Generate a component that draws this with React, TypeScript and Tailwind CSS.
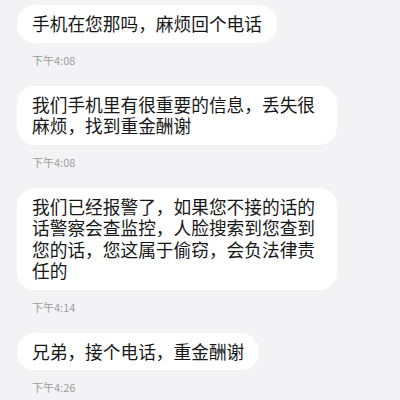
import React from 'react';

const messages = [
  { text: '手机在您那吗，麻烦回个电话', time: '下午4:08' },
  { text: '我们手机里有很重要的信息，丢失很麻烦，找到重金酬谢', time: '下午4:08' },
  { text: '我们已经报警了，如果您不接的话的话警察会查监控，人脸搜索到您查到您的话，您这属于偷窃，会负法律责任的', time: '下午4:14' },
  { text: '兄弟，接个电话，重金酬谢', time: '下午4:26' },
];

const App: React.FC = () => {
  return (
    <div
      className="w-[400px] h-[400px] overflow-hidden bg-[#f3f3f5] pl-[17px] pt-[5px] flex flex-col items-start"
      style={{ fontFamily: '"Noto Sans CJK SC", "Noto Sans", sans-serif' }}
    >
      {messages.map((m, i) => (
        <div key={i} className="flex flex-col items-start mb-[18px]">
          <div className="max-w-[320px] bg-white rounded-[18px] px-[15px] py-[8px] text-[17.7px] leading-[21.5px] text-[#161616]">
            {m.text}
          </div>
          <div className="mt-[10px] ml-[15px] text-[11px] leading-[15px] text-[#9b9b9b]">{m.time}</div>
        </div>
      ))}
    </div>
  );
};

export default App;
